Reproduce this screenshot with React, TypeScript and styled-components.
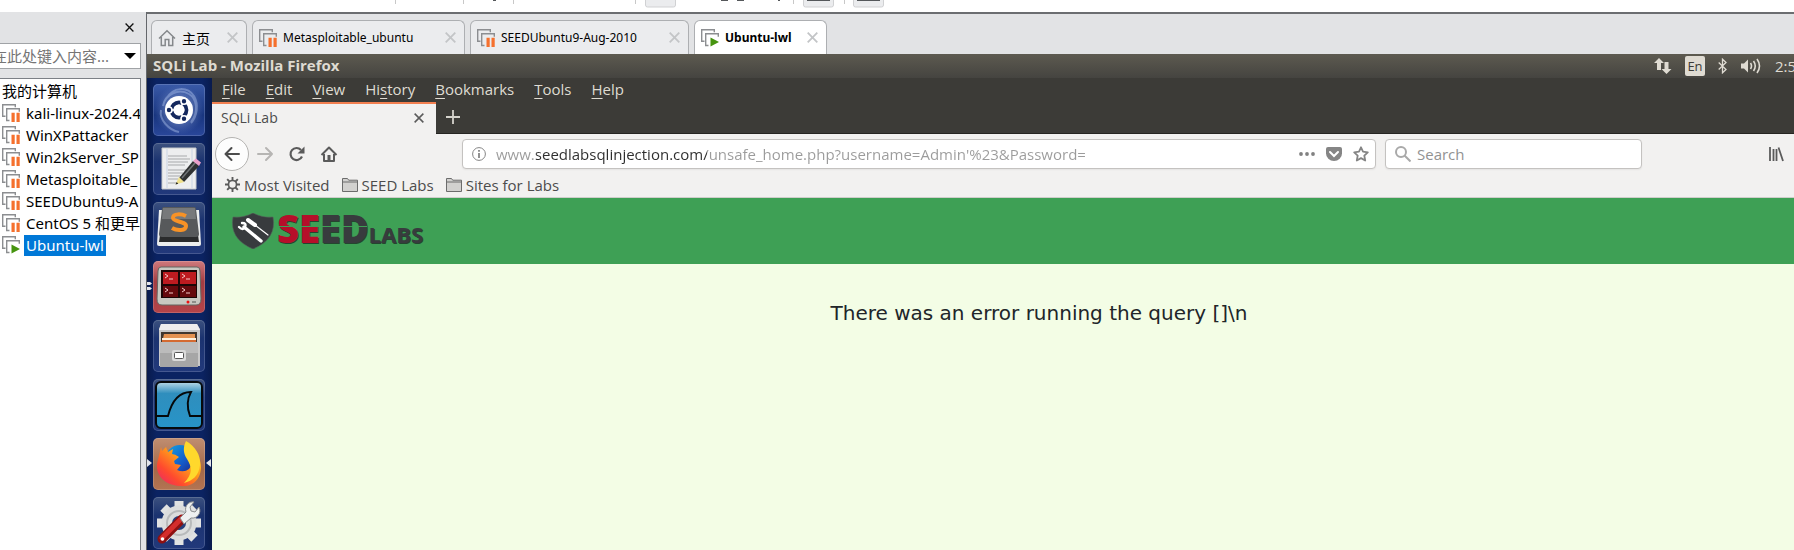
import React from 'react';
import styled, { createGlobalStyle, css } from 'styled-components';

const hostFont = '"Noto Sans", "Noto Sans CJK SC", sans-serif';
const guestFont = '"Open Sans", "Noto Sans", sans-serif';

const GlobalStyle = createGlobalStyle`
  *, *::before, *::after { box-sizing: border-box; }
  body { margin: 0; overflow: hidden; background: #e2e3e5; font-family: ${hostFont}; }
  button { border: 0; padding: 0; background: none; font: inherit; color: inherit; }
  input { font: inherit; border: 0; outline: 0; min-width: 0; }
  svg { display: block; flex: none; }
  ul { list-style: none; margin: 0; padding: 0; }
`;

const Page = styled.div`
  display: flex;
  flex-direction: column;
  height: 100vh;
  overflow: hidden;
`;

/* ---------- host toolbar ---------- */
const HostToolbar = styled.div`
  height: 12px;
  flex: none;
  background: #fff;
  overflow: hidden;
`;

const Workspace = styled.div`
  display: flex;
  flex: 1;
  min-height: 0;
`;

/* ---------- library sidebar ---------- */
const Sidebar = styled.aside`
  width: 147px;
  flex: none;
  display: flex;
  flex-direction: column;
  padding-right: 5px;
  border-right: 1px solid #64676b;
  font-size: 15px;
  overflow: hidden;
`;

const SidebarHeader = styled.div`
  height: 31px;
  flex: none;
  display: flex;
  align-items: center;
  justify-content: flex-end;
  padding-right: 7px;
`;

const SearchCombo = styled.div`
  display: flex;
  align-items: center;
  height: 26px;
  flex: none;
  margin-left: -12px;
  padding: 0 4px 0 3px;
  border: 1px solid #a0a3a6;
  background: #fff;
  input { flex: 1; padding: 0; font-size: 15px; background: none; }
  input::placeholder { color: #757575; opacity: 1; }
`;

const Tree = styled.div`
  flex: 1;
  margin-top: 9px;
  margin-left: -2px;
  padding: 1px 1px 0 3px;
  border: 1px solid #7c8086;
  border-bottom: 0;
  background: #fff;
  overflow: hidden;
`;

const TreeRow = styled.li`
  display: flex;
  align-items: center;
  gap: 4px;
  height: 22px;
  white-space: nowrap;
`;

const TreeLabel = styled.button<{ $selected?: boolean; $root?: boolean }>`
  height: 21px;
  line-height: 20px;
  padding: 0 ${(p) => (p.$root ? 0 : 2)}px;
  ${(p) => p.$selected && css`background: #0078d7; color: #fff;`}
`;

/* ---------- virtual machine tabs ---------- */
const Main = styled.main`
  flex: 1;
  min-width: 0;
  display: flex;
  flex-direction: column;
  border-top: 2px solid #6b6d70;
`;

const VmTabs = styled.nav`
  display: flex;
  gap: 5px;
  height: 40px;
  flex: none;
  padding: 6px 4px 0;
`;

const VmTab = styled.div<{ $width: number; $active?: boolean; $large?: boolean }>`
  display: flex;
  align-items: center;
  gap: 6px;
  width: ${(p) => p.$width}px;
  padding: 0 8px 0 6px;
  border: 1px solid #adafb2;
  border-bottom: 0;
  border-radius: 6px 6px 0 0;
  background: ${(p) => (p.$active ? '#fff' : '#ebecee')};
  font-size: ${(p) => (p.$large ? 14 : 12)}px;
  font-weight: ${(p) => (p.$active ? 700 : 400)};
  white-space: nowrap;
`;

const VmTabLabel = styled.button`
  display: flex;
  align-items: center;
  gap: 6px;
  flex: 1;
  text-align: left;
`;

/* ---------- guest desktop ---------- */
const Guest = styled.section`
  flex: 1;
  min-height: 0;
  display: flex;
  flex-direction: column;
  font-family: ${guestFont};
  font-size: 15px;
  color: #dfdbd2;
  background: #3c3b37;
`;

const TopPanel = styled.header`
  display: flex;
  align-items: center;
  height: 24px;
  flex: none;
  padding-left: 6px;
  background: linear-gradient(#5d5a50, #454440);
  overflow: hidden;
  white-space: nowrap;
`;

const WindowTitle = styled.h1`
  flex: 1;
  margin: 0;
  padding-bottom: 2px;
  font-size: 15px;
  line-height: 22px;
  font-weight: 700;
`;

const Indicators = styled.div`
  display: flex;
  align-items: center;
  gap: 13px;
  width: 141px;
`;

const Language = styled.span`
  width: 20px;
  height: 20px;
  flex: none;
  border-radius: 2px;
  background: #dfdbd2;
  color: #3c3b37;
  font-size: 13px;
  line-height: 20px;
  text-align: center;
`;

const Desktop = styled.div`
  display: flex;
  flex: 1;
  min-height: 0;
`;

const Launcher = styled.nav`
  width: 65px;
  flex: none;
  display: flex;
  flex-direction: column;
  gap: 7px;
  padding: 6px 0 0 6px;
  background: linear-gradient(90deg, #091b4d, #0b2362 15%, #0b2362 85%, #091b4d);
  overflow: hidden;
`;

const Tile = styled.button<{ $tint: string }>`
  position: relative;
  width: 52px;
  height: 52px;
  flex: none;
  border-radius: 5px;
  background: ${(p) => p.$tint};
  box-shadow: inset 0 0 0 1px rgba(255, 255, 255, 0.16);
`;

const Pip = styled.svg<{ $side: 'left' | 'right' }>`
  position: absolute;
  top: 20px;
  ${(p) => p.$side}: -6px;
`;

/* ---------- firefox ---------- */
const Firefox = styled.div`
  flex: 1;
  min-width: 0;
  display: flex;
  flex-direction: column;
`;

const MenuBar = styled.div`
  display: flex;
  align-items: center;
  gap: 20px;
  height: 24px;
  flex: none;
  padding: 0 0 2px 10px;
  button { line-height: 22px; }
  u { text-underline-offset: 3px; text-decoration-thickness: 1px; }
`;

const TabStrip = styled.div`
  display: flex;
  height: 32px;
  flex: none;
  border-bottom: 1px solid #262522;
`;

const BrowserTab = styled.div`
  display: flex;
  align-items: center;
  justify-content: space-between;
  width: 224px;
  height: 32px;
  padding: 0 12px 3px 9px;
  border-top: 2px solid #f27f50;
  background: #f2f1f0;
  color: #4c4c4c;
  font-size: 14px;
`;

const NewTab = styled.button`
  padding: 0 0 2px 10px;
`;

const NavBar = styled.div`
  display: flex;
  align-items: center;
  height: 40px;
  flex: none;
  padding: 0 10px 0 3px;
  background: #f2f1f0;
  color: #5b5b5b;
`;

const NavButtons = styled.div`
  display: flex;
  align-items: center;
  gap: 14px;
  width: 247px;
  flex: none;
`;

const BackButton = styled.button`
  display: grid;
  place-items: center;
  width: 34px;
  height: 34px;
  margin-right: -7px;
  border: 1px solid #b4b3b1;
  border-radius: 50%;
  background: #fdfdfd;
`;

const Field = styled.div<{ $width?: number }>`
  display: flex;
  align-items: center;
  gap: ${(p) => (p.$width ? 6 : 10)}px;
  ${(p) => (p.$width ? css`width: ${p.$width}px; flex: none;` : css`flex: 1; min-width: 0;`)}
  height: 30px;
  margin-right: 9px;
  padding: 0 6px 0 9px;
  border: 1px solid #c4c2c0;
  border-radius: 4px;
  background: #fff;
  box-shadow: 0 1px 2px rgba(0, 0, 0, 0.06);
  input { flex: 1; padding: 0; height: 26px; }
`;

/* host name is dark, the rest of the address is dimmed */
const UrlInput = styled.input`
  color: transparent;
  background: linear-gradient(90deg, #9b9b9b 40px, #2e2e2e 40px, #2e2e2e 211px, #9b9b9b 211px);
  -webkit-background-clip: text;
  background-clip: text;
`;

const SearchInput = styled.input`
  background: none;
  &::placeholder { color: #929292; opacity: 1; }
`;

const UrlActions = styled.div`
  display: flex;
  align-items: center;
  gap: 11px;
`;

const Spacer = styled.div`
  width: 117px;
  flex: none;
`;

const BookmarkBar = styled.div`
  display: flex;
  align-items: center;
  gap: 12px;
  height: 24px;
  flex: none;
  padding: 0 0 2px 13px;
  border-bottom: 1px solid #cfcecb;
  background: #f2f1f0;
  color: #4c4c4c;
`;

const Bookmark = styled.button`
  display: flex;
  align-items: center;
  gap: 4px;
  line-height: 20px;
`;

const WebPage = styled.div`
  flex: 1;
  background: #f3fde5;
  color: #212529;
`;

const Banner = styled.header`
  display: flex;
  align-items: center;
  height: 66px;
  padding-left: 19px;
  background: #3ea055;
`;

const Brand = styled.a`
  display: flex;
  align-items: center;
  gap: 2px;
  text-decoration: none;
`;

const Wordmark = styled.span`
  position: relative;
  display: flex;
  align-items: baseline;
  line-height: 40px;
  font-weight: 800;
  font-size: 38px;
  color: #383b3e;
  text-shadow: 1px 1px 0 #24462f;
  em { font-style: normal; color: #b60f2a; }
  small { font-size: 22px; font-weight: 700; }
  &::after {
    content: '';
    position: absolute;
    left: 0;
    top: 18px;
    width: 90px;
    height: 1px;
    background: #3ea055;
  }
`;

const Message = styled.p`
  margin: 0;
  padding: 34px 0 0 72px;
  font-family: "DejaVu Sans", sans-serif;
  font-size: 20px;
  line-height: 30px;
  text-align: center;
`;

/* ---------- icons ---------- */
const VmIcon = ({ running }: { running?: boolean }) => (
  <svg width="18" height="18" viewBox="0 0 18 18" fill="none" stroke="#8c8e91" strokeWidth="1.4">
    <path d="M3.5 12.3H.7V.7h12.6v2.6" />
    <path d="M7.5 16.5H4.7V4.7h12.6v3" />
    {running ? (
      <path d="M9.500 8.500v9l8.500-4.500z" fill="#46940f" stroke="none" />
    ) : (
      <path d="M9.500 8.800h3.200V18H9.500zM14.500 8.800h3.200V18h-3.200z" fill="#f5702d" stroke="none" />
    )}
  </svg>
);

const Cross = ({ size = 11, color = '#c3c5c7', width = 1.8 }) => (
  <svg width={size} height={size} viewBox="0 0 11 11" stroke={color} strokeWidth={width}>
    <path d="M.7.7l9.6 9.6M10.3.7L.7 10.3" />
  </svg>
);

const HostHome = () => (
  <svg width="18" height="18" viewBox="0 0 18 18" fill="none" stroke="#85888b" strokeWidth="1.5">
    <path d="M1 9.5L9 1.8l8 7.7M3.3 8v8.5h3.9v-6h3.6v6h3.9V8" />
  </svg>
);

const Folder = () => (
  <svg width="16" height="14" viewBox="0 0 16 14" fill="#d2d1cf" stroke="#6c6c6c">
    <path d="M.5 13.5V.5h5l1.2 1.7h8.8v11.3z" />
    <path d="M.5 4h15" />
  </svg>
);

const Gear = () => (
  <svg width="15" height="15" viewBox="0 0 16 16" fill="none" stroke="#5b5b5b">
    <circle cx="8" cy="8" r="4.3" strokeWidth="1.8" />
    <g strokeWidth="2">
      <path d="M8 0v3.5M8 12.5V16M0 8h3.5M12.5 8H16M2.3 2.3l2.5 2.5M11.2 11.2l2.5 2.5M2.3 13.7l2.5-2.5M11.2 4.8l2.5-2.5" />
    </g>
  </svg>
);

const Art = ({ children }: { children: React.ReactNode }) => (
  <svg width="52" height="52" viewBox="0 0 52 52" fill="none">{children}</svg>
);

const UbuntuArt = () => (
  <Art>
    <defs>
      <radialGradient id="ubu"><stop offset="0" stopColor="#d5def5" /><stop offset="1" stopColor="#6681c3" stopOpacity="0" /></radialGradient>
    </defs>
    <circle cx="26" cy="26" r="25" fill="url(#ubu)" opacity=".8" />
    <path d="M10 22C12 10 26 4 36 10c8 5 10 18 2 28M8 26c-2 10 8 20 18 22M14 14C20 3 34 2 41 12c5 9 3 20-3 27" stroke="#adc0ea" strokeWidth="2" opacity=".45" />
    <circle cx="26" cy="26" r="14" fill="#fff" />
    <circle cx="26" cy="26" r="7.5" stroke="#14285d" strokeWidth="3.8" />
    <g stroke="#fff" strokeWidth="1.6" fill="#14285d">
      <path d="M26 26L12 26M26 26l7 12M26 26l7-12" />
      <circle cx="16" cy="26" r="3" /><circle cx="31" cy="17.3" r="3" /><circle cx="31" cy="34.7" r="3" />
    </g>
    <circle cx="26" cy="26" r="5.4" fill="#fff" />
  </Art>
);

const EditorArt = () => (
  <Art>
    <path d="M9 5h34v41H9z" fill="#edeeef" stroke="#c5c9cc" />
    <path d="M14 6v39M39 6v39" stroke="#c9d4e4" />
    <path d="M15 13h19M15 16h22M15 19h20M15 22h17M15 27h20M15 30h15M15 33h12M15 36h10M15 40h8" stroke="#a7a9ab" />
    <path d="M26 35L40 18l6 5-15 16z" fill="#2f3132" />
    <path d="M29 35l13-15" stroke="#707476" strokeWidth="1.5" />
    <path d="M40 18l3-2.500 5 4L46 23z" fill="#eb9fcb" />
    <path d="M26 34l-3.500 7.500L31 39z" fill="#efe08a" />
    <path d="M23.700 39l-1.200 2.500 2.700-.8z" fill="#222" />
  </Art>
);

const SublimeArt = () => (
  <Art>
    <path d="M6 8L4 42q0 2 2 2h40q2 0 2-2L46 8z" fill="#eceeee" />
    <path d="M7 33h38l1 7H6z" fill="#2a2b2c" />
    <path d="M9 7q0-2 2-2h30q2 0 2 2l3 25q0 3-3 3H9q-3 0-3-3z" fill="#57595b" />
    <path d="M10 6h32l1 11H9z" fill="#8c8f91" opacity=".6" />
    <path d="M33 14c-4-2-13-3-13 2 0 4 13 3 13 8s-9 5-14 2" stroke="#f79226" strokeWidth="4" />
  </Art>
);

const TerminatorArt = () => (
  <Art>
    <path d="M8 6h36q3 0 3 4l1 28q0 6-5 6H9q-5 0-5-6L5 10q0-4 3-4z" fill="#c8c8c1" stroke="#656661" />
    <path d="M8 9h36v28H8z" fill="#1b0707" />
    <path d="M10 11h15v12H10zM27 11h16v12H27z" fill="#bd1b20" />
    <path d="M10 25h15v11H10zM27 25h16v11H27z" fill="#65090d" />
    <path d="M12 13l3 2-3 2m4 1h4M29 13l3 2-3 2m4 1h4M12 27l3 2-3 2m4 1h4M29 27l3 2-3 2m4 1h4" stroke="#f6c8c8" />
    <circle cx="35" cy="41" r="1.5" fill="#e11" />
    <path d="M39 41h4" stroke="#8d8e89" strokeWidth="2" />
  </Art>
);

const FilesArt = () => (
  <Art>
    <path d="M8 4h36l3 5v37H6V9z" fill="#c9c9c9" />
    <path d="M8 4h36l3 6H6z" fill="#eee" />
    <path d="M8 12h36v11H8z" fill="#40372f" />
    <path d="M11 14h31v9H9z" fill="#e39251" />
    <path d="M9 18h34v4H9z" fill="#fff0dc" />
    <path d="M9 20h34v3H9z" fill="#d46a31" />
    <path d="M7 22h38v25H7z" fill="#a6a6a6" />
    <path d="M7 22h38v11H7z" fill="#bbb" />
    <rect x="19" y="30" width="14" height="11" rx="2" fill="#dadada" />
    <rect x="21.5" y="32.5" width="9" height="6" rx="1" fill="#fff" stroke="#555" />
  </Art>
);

const WiresharkArt = () => (
  <Art>
    <defs><linearGradient id="ws" x2="0" y2="1"><stop stopColor="#b8d9e7" /><stop offset=".25" stopColor="#2f8ebd" /><stop offset="1" stopColor="#2794c8" /></linearGradient></defs>
    <rect x="3" y="3" width="46" height="46" rx="5" fill="url(#ws)" stroke="#060a0c" strokeWidth="2" />
    <path d="M3 37h12c3-12 9-24 23-24-4 7-4 16-1 24h12" stroke="#05090b" strokeWidth="1.9" />
  </Art>
);

const FirefoxArt = () => (
  <Art>
    <defs>
      <linearGradient id="ffa" x1="1" y1="0" x2="0" y2="1"><stop stopColor="#ffe32c" /><stop offset=".4" stopColor="#ff9a1b" /><stop offset=".7" stopColor="#ff4a2e" /><stop offset="1" stopColor="#e62173" /></linearGradient>
      <linearGradient id="ffb" x2="1" y2="1"><stop stopColor="#14a6e4" /><stop offset=".6" stopColor="#1458c7" /><stop offset="1" stopColor="#231f79" /></linearGradient>
    </defs>
    <circle cx="27" cy="22" r="15" fill="url(#ffb)" />
    <path d="M8 9l1 4 4-4 2 5 5-3-1 5q3 0 7 3l-5 4 1 3 6 1-4 5q7 3 12-1c6-6 0-17-2-22 4-1 15 10 14 21-1 15-12 19-21 18C9 47 1 34 5 22z" fill="url(#ffa)" />
    <path d="M33 3c9 5 15 14 14 24-1 11-8 16-16 18 9-9 8-16 3-24-4-6-4-12-1-18z" fill="#ffd82c" />
  </Art>
);

const SettingsArt = () => (
  <Art>
    <g stroke="#e1e2e2" strokeWidth="9">
      <path d="M26 4v44M4 26h44M10.500 10.500l31 31M10.500 41.500l31-31" />
    </g>
    <circle cx="26" cy="26" r="12" stroke="#dcdddd" strokeWidth="11" />
    <circle cx="26" cy="26" r="12" stroke="#b8babb" strokeWidth="2" />
    <circle cx="26" cy="26" r="7" fill="#263f7b" />
    <path d="M9 42l20-20" stroke="#8d1011" strokeWidth="9" strokeLinecap="round" />
    <path d="M9 41l20-20" stroke="#d42d2c" strokeWidth="5" strokeLinecap="round" />
    <circle cx="9.5" cy="42" r="1.8" fill="#fff" />
    <path d="M27 21l6-6c-2-6 3-11 8-10l-4 5 1 4 4 1 4-5c3 6-2 12-8 11l-7 6z" fill="#eef0f0" stroke="#8a8d8e" />
  </Art>
);

const SeedShield = () => (
  <svg width="44" height="36" viewBox="0 0 44 36" fill="none" stroke="#fff" strokeLinecap="round">
    <path d="M22 0q9 5 20 4 4 22-20 32Q-2 26 2 4q11 1 20-4z" fill="#383b3e" stroke="#55605a" strokeWidth=".6" />
    <path d="M17 7l7 5" strokeWidth="4" />
    <path d="M24 12l13 10" strokeWidth="1.2" />
    <path d="M13 14l17 14" strokeWidth="3.4" />
    <path d="M8 14q4 4 6 0t-3-4" strokeWidth="2.4" />
  </svg>
);

const shade = 'linear-gradient(#3c517f, #1b3370 35%, #22397b)';
const launcherItems = [
  { name: 'Search your computer', tint: 'linear-gradient(#3a5aa8, #18357f 60%, #2a479a)', art: <UbuntuArt /> },
  { name: 'Text Editor', tint: shade, art: <EditorArt /> },
  { name: 'Sublime Text', tint: shade, art: <SublimeArt /> },
  { name: 'Terminator', tint: 'linear-gradient(#cf7a7d, #a33c42 40%, #b54449)', art: <TerminatorArt />, windows: 2 },
  { name: 'Files', tint: shade, art: <FilesArt /> },
  { name: 'Wireshark', tint: shade, art: <WiresharkArt /> },
  { name: 'Firefox', tint: 'linear-gradient(#c08e71, #a36849 60%, #b47452)', art: <FirefoxArt />, windows: 1, focused: true },
  { name: 'System Settings', tint: shade, art: <SettingsArt /> },
];

const machines = ['kali-linux-2024.4', 'WinXPattacker', 'Win2kServer_SP', 'Metasploitable_', 'SEEDUbuntu9-A', 'CentOS 5 和更早'];
const menus: [string, string, string][] = [['', 'F', 'ile'], ['', 'E', 'dit'], ['', 'V', 'iew'], ['Hi', 's', 'tory'], ['', 'B', 'ookmarks'], ['', 'T', 'ools'], ['', 'H', 'elp']];

export default function App() {
  return (
    <Page>
      <GlobalStyle />
      <HostToolbar>
        <svg width="900" height="12" viewBox="0 0 900 12">
          <path d="M395.500 0v4M463.500 0v4M513.500 0v4M635.500 0v4M793.500 0v4M844.500 0v4" stroke="#c8c8c8" />
          <g fill="#ebecee" stroke="#d0d1d3">
            <rect x="645.5" y="-9" width="30" height="16" rx="2" />
            <rect x="803.5" y="-9" width="30" height="16" rx="2" />
            <rect x="853.5" y="-9" width="30" height="16" rx="2" />
          </g>
          <path d="M807 .5h23M857 .5h23M721 .5h7M737 .5h7M493 .5h3M778 .5h2" stroke="#55585b" />
        </svg>
      </HostToolbar>
      <Workspace>
        <Sidebar>
          <SidebarHeader>
            <button aria-label="关闭"><Cross size={9} color="#111" width={1.6} /></button>
          </SidebarHeader>
          <SearchCombo>
            <input aria-label="搜索" placeholder="在此处键入内容..." />
            <button aria-label="展开">
              <svg width="12" height="6" viewBox="0 0 12 6"><path d="M0 0h12L6 6z" /></svg>
            </button>
          </SearchCombo>
          <Tree>
            <ul>
              <TreeRow><TreeLabel $root>我的计算机</TreeLabel></TreeRow>
              {machines.map((name) => (
                <TreeRow key={name}><VmIcon /><TreeLabel>{name}</TreeLabel></TreeRow>
              ))}
              <TreeRow><VmIcon running /><TreeLabel $selected>Ubuntu-lwl</TreeLabel></TreeRow>
            </ul>
          </Tree>
        </Sidebar>
        <Main>
          <VmTabs>
            <VmTab $width={96} $large>
              <VmTabLabel><HostHome />主页</VmTabLabel>
              <button aria-label="关闭主页"><Cross /></button>
            </VmTab>
            <VmTab $width={213}>
              <VmTabLabel><VmIcon />Metasploitable_ubuntu</VmTabLabel>
              <button aria-label="关闭 Metasploitable"><Cross /></button>
            </VmTab>
            <VmTab $width={219}>
              <VmTabLabel><VmIcon />SEEDUbuntu9-Aug-2010</VmTabLabel>
              <button aria-label="关闭 SEEDUbuntu9"><Cross /></button>
            </VmTab>
            <VmTab $width={133} $active>
              <VmTabLabel><VmIcon running />Ubuntu-lwl</VmTabLabel>
              <button aria-label="关闭 Ubuntu"><Cross /></button>
            </VmTab>
          </VmTabs>
          <Guest>
            <TopPanel>
              <WindowTitle>SQLi Lab - Mozilla Firefox</WindowTitle>
              <Indicators>
                <svg width="19" height="18" viewBox="0 0 19 18" fill="#dfdbd2">
                  <path d="M6 1l5 5H8v7H4V6H1zM13.500 17l-5-5h3V5h4v7h3z" />
                </svg>
                <Language>En</Language>
                <svg width="9" height="16" viewBox="0 0 9 16" fill="none" stroke="#dfdbd2" strokeWidth="1.3">
                  <path d="M.7 4.500L8 11.500l-3.500 3.300V1.200L8 4.500.7 11.500" />
                </svg>
                <svg width="22" height="18" viewBox="0 0 22 18" fill="none" stroke="#dfdbd2" strokeWidth="1.6">
                  <path d="M1 6.500h3l4-4v13l-4-4H1z" fill="#dfdbd2" stroke="none" />
                  <path d="M10.500 6q2 3 0 6M13.500 4q3.500 5 0 10M17 2q5 7 0 14" />
                </svg>
                <span>2:5</span>
              </Indicators>
            </TopPanel>
            <Desktop>
              <Launcher>
                {launcherItems.map((item) => (
                  <Tile key={item.name} aria-label={item.name} $tint={item.tint}>
                    {item.art}
                    {item.windows && (
                      <Pip $side="left" width="5" height="10" viewBox="0 0 5 10" fill="#e3e5ea">
                        {item.windows === 2 ? <path d="M0 1h3l2 1.500L3 4H0zM0 6h3l2 1.500L3 9H0z" /> : <path d="M0 1l5 4-5 4z" />}
                      </Pip>
                    )}
                    {item.focused && (
                      <Pip $side="right" width="5" height="10" viewBox="0 0 5 10" fill="#e3e5ea"><path d="M5 1L0 5l5 4z" /></Pip>
                    )}
                  </Tile>
                ))}
              </Launcher>
              <Firefox>
                <MenuBar>
                  {menus.map(([before, key, after]) => (
                    <button key={after}>{before}<u>{key}</u>{after}</button>
                  ))}
                </MenuBar>
                <TabStrip>
                  <BrowserTab>
                    <span>SQLi Lab</span>
                    <button aria-label="Close tab"><Cross size={10} color="#5b5b5b" width={1.7} /></button>
                  </BrowserTab>
                  <NewTab aria-label="New tab">
                    <svg width="14" height="14" viewBox="0 0 14 14" stroke="#d5d3cc" strokeWidth="1.8"><path d="M7 0v14M0 7h14" /></svg>
                  </NewTab>
                </TabStrip>
                <NavBar>
                  <NavButtons>
                    <BackButton aria-label="Back">
                      <svg width="16" height="16" viewBox="0 0 16 16" fill="none" stroke="#4c4c4c" strokeWidth="2" strokeLinecap="round" strokeLinejoin="round"><path d="M15 8H1.500M7.500 2l-6 6 6 6" /></svg>
                    </BackButton>
                    <button aria-label="Forward">
                      <svg width="18" height="16" viewBox="0 0 18 16" fill="none" stroke="#b6b5b3" strokeWidth="2" strokeLinecap="round" strokeLinejoin="round"><path d="M2 8h14M10 2l6 6-6 6" /></svg>
                    </button>
                    <button aria-label="Reload">
                      <svg width="18" height="16" viewBox="0 0 18 16" fill="none" stroke="#5b5b5b" strokeWidth="2.2"><path d="M14 10.500A6 6 0 1 1 13 4" /><path d="M16.500.5v7h-7z" fill="#5b5b5b" stroke="none" /></svg>
                    </button>
                    <button aria-label="Home">
                      <svg width="18" height="16" viewBox="0 0 18 16" fill="none" stroke="#5b5b5b" strokeWidth="2" strokeLinejoin="round"><path d="M1.500 9L9 1.500 16.500 9M4 8v7h10V8M9 15v-4" /><path d="M7.500 9h3v6h-3z" fill="#5b5b5b" stroke="none" /></svg>
                    </button>
                  </NavButtons>
                  <Field>
                    <svg width="14" height="14" viewBox="0 0 14 14" fill="none" stroke="#858585"><circle cx="7" cy="7" r="6.4" /><path d="M7 6v5M7 3v1.800" strokeWidth="1.8" /></svg>
                    <UrlInput aria-label="Address" defaultValue="www.seedlabsqlinjection.com/unsafe_home.php?username=Admin'%23&Password=" />
                    <UrlActions>
                      <button aria-label="Page actions">
                        <svg width="16" height="16" viewBox="0 0 16 16" fill="#818181"><circle cx="2" cy="8" r="1.9" /><circle cx="8" cy="8" r="1.9" /><circle cx="14" cy="8" r="1.9" /></svg>
                      </button>
                      <button aria-label="Save to Pocket">
                        <svg width="16" height="16" viewBox="0 0 16 16"><path d="M2 1h12q2 0 2 2v4.500a8 7.500 0 0 1-16 0V3q0-2 2-2z" fill="#858585" /><path d="M4 6l4 4 4-4" fill="none" stroke="#fff" strokeWidth="2" strokeLinecap="round" /></svg>
                      </button>
                      <button aria-label="Bookmark this page">
                        <svg width="16" height="16" viewBox="0 0 16 16" fill="none" stroke="#858585" strokeWidth="1.8" strokeLinejoin="round"><path d="M8 1.300l2 4.400 4.800.6-3.500 3.300.9 4.900L8 12.100l-4.200 2.400.9-4.900L1.200 6.300 6 5.700z" /></svg>
                      </button>
                    </UrlActions>
                  </Field>
                  <Field $width={257}>
                    <svg width="16" height="16" viewBox="0 0 16 16" fill="none" stroke="#a9a9a9" strokeWidth="2"><circle cx="6" cy="6" r="5" /><path d="M9.500 9.500L15.500 15.500" /></svg>
                    <SearchInput aria-label="Search" placeholder="Search" />
                  </Field>
                  <Spacer />
                  <button aria-label="Library">
                    <svg width="16" height="16" viewBox="0 0 16 16" fill="none" stroke="#5b5b5b" strokeWidth="1.8"><path d="M2 1v14M5.500 3v12M8.500 3v12M10.500 1.500L15 15" /></svg>
                  </button>
                </NavBar>
                <BookmarkBar>
                  <Bookmark><Gear />Most Visited</Bookmark>
                  <Bookmark><Folder />SEED Labs</Bookmark>
                  <Bookmark><Folder />Sites for Labs</Bookmark>
                </BookmarkBar>
                <WebPage>
                  <Banner>
                    <Brand href="#" aria-label="SEED Labs">
                      <SeedShield />
                      <Wordmark><span><em>SE</em>ED</span><small>LABS</small></Wordmark>
                    </Brand>
                  </Banner>
                  <Message>There was an error running the query []\n</Message>
                </WebPage>
              </Firefox>
            </Desktop>
          </Guest>
        </Main>
      </Workspace>
    </Page>
  );
}
